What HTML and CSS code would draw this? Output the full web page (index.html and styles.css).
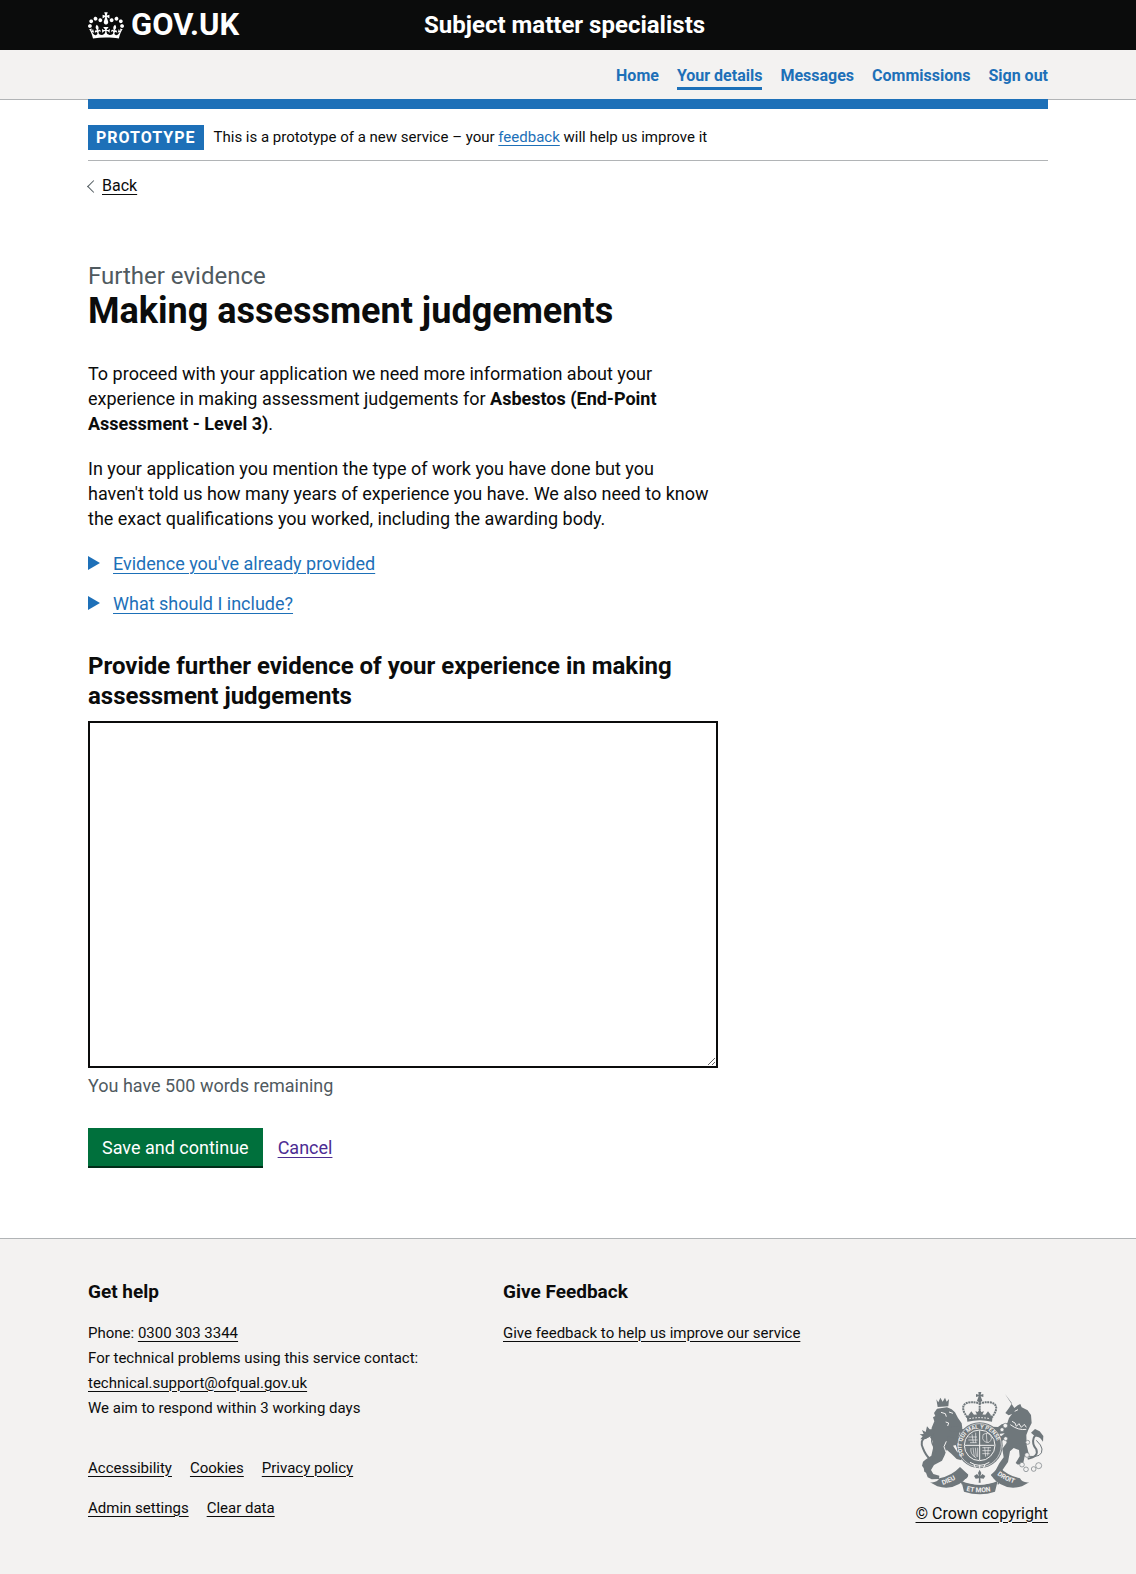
FILE: index.html
```html
<!DOCTYPE html>
<html lang="en">
<head>
  <meta charset="utf-8">
  <meta name="viewport" content="width=device-width, initial-scale=1">
  <title>Making assessment judgements – Subject matter specialists</title>
  <link rel="stylesheet" href="styles.css">
</head>
<body>
  <header class="header">
    <div class="container header-inner">
      <a class="header-logo" href="#">
        <svg class="header-crown" viewBox="0 0 132 97" aria-hidden="true"><path fill="currentColor" fill-rule="evenodd" d="M25 30.2c3.5 1.5 7.7-.2 9.1-3.7 1.5-3.6-.2-7.8-3.9-9.2-3.6-1.4-7.6.3-9.1 3.9-1.4 3.5.3 7.5 3.9 9zM9 39.5c3.6 1.5 7.8-.2 9.2-3.7 1.5-3.6-.2-7.8-3.9-9.1-3.6-1.5-7.6.2-9.1 3.8-1.4 3.5.3 7.5 3.8 9zM4.4 57.2c3.5 1.5 7.7-.2 9.1-3.8 1.5-3.6-.2-7.7-3.9-9.1-3.5-1.5-7.6.3-9.1 3.8-1.4 3.5.3 7.6 3.9 9.1zm38.3-21.4c3.5 1.5 7.7-.2 9.1-3.8 1.5-3.6-.2-7.7-3.9-9.1-3.6-1.5-7.6.3-9.1 3.8-1.3 3.6.4 7.7 3.9 9.1zm64.4-5.6c-3.6 1.5-7.8-.2-9.1-3.7-1.5-3.6.2-7.8 3.8-9.2 3.6-1.4 7.7.3 9.2 3.9 1.3 3.5-.4 7.5-3.9 9zm15.9 9.3c-3.6 1.5-7.7-.2-9.1-3.7-1.5-3.6.2-7.8 3.7-9.1 3.6-1.5 7.7.2 9.2 3.8 1.5 3.5-.3 7.5-3.8 9zm4.7 17.7c-3.6 1.5-7.8-.2-9.2-3.8-1.5-3.6.2-7.7 3.9-9.1 3.6-1.5 7.7.3 9.2 3.8 1.3 3.5-.4 7.6-3.9 9.1zM89.3 35.8c-3.6 1.5-7.8-.2-9.2-3.8-1.4-3.6.2-7.7 3.9-9.1 3.6-1.5 7.7.3 9.2 3.8 1.4 3.6-.3 7.7-3.9 9.1zM69.7 17.7l8.9 4.7V9.3l-8.9 2.8c-.2-.3-.5-.6-.9-.9L72.4 0H59.6l3.5 11.2c-.3.3-.6.5-.9.9l-8.8-2.8v13.1l8.8-4.7c.3.3.6.7.9.9l-5 15.4v.1c-.2.8-.4 1.6-.4 2.4 0 4.1 3.1 7.5 7 8.1h.2c.3 0 .7.1 1 .1.4 0 .7 0 1-.1h.2c4-.6 7.1-4.1 7.1-8.1 0-.8-.1-1.7-.4-2.4V34l-5.1-15.4c.4-.2.7-.6 1-.9zM66 92.8c16.9 0 32.8 1.1 47.1 3.2 4-16.9 8.9-26.7 14-33.5l-9.6-3.4c1 4.9 1.1 7.2 0 10.2-1.5-1.4-3-4.3-4.2-8.7L108.6 76c2.8-2 5-3.2 7.5-3.3-4.4 9.4-10 11.9-13.6 11.2-4.3-.8-6.3-4.6-5.6-7.9 1-4.7 5.7-5.9 8-.5 4.3-8.7-3-11.4-7.6-8.8 7.1-7.2 7.9-13.5 2.1-21.1-8 6.1-8.1 12.3-4.5 20.8-4.7-5.4-12.1-2.5-9.5 6.2 3.4-5.2 7.9-2 7.2 3.1-.6 4.3-6.4 7.8-13.5 7.2-10.3-.9-10.9-8-11.2-13.8 2.5-.5 7.1 1.8 11 7.3L80.2 60c-4.1 4.4-8 5.3-12.3 5.4 1.4-4.4 8-11.6 8-11.6H55.5s6.4 7.2 7.9 11.6c-4.2-.1-8-1-12.3-5.4l1.4 16.4c3.9-5.5 8.5-7.7 10.9-7.3-.3 5.8-.9 12.8-11.1 13.8-7.2.6-12.9-2.9-13.5-7.2-.7-5 3.8-8.3 7.1-3.1 2.7-8.7-4.6-11.6-9.4-6.2 3.7-8.5 3.6-14.7-4.6-20.8-5.8 7.6-5 13.9 2.2 21.1-4.7-2.6-11.9.1-7.7 8.8 2.3-5.5 7.1-4.2 8.1.5.7 3.3-1.3 7.1-5.7 7.9-3.5.7-9-1.8-13.5-11.2 2.5.1 4.7 1.3 7.5 3.3l-4.7-15.4c-1.2 4.4-2.7 7.2-4.3 8.7-1.1-3-.9-5.3 0-10.2l-9.5 3.4c5 6.9 9.9 16.7 14 33.5 14.8-2.1 30.8-3.2 47.7-3.2z"/></svg>
        <span>GOV.UK</span>
      </a>
      <a class="header-service" href="#">Subject matter specialists</a>
    </div>
  </header>

  <nav class="nav" aria-label="Account">
    <ul class="container nav-list">
      <li><a class="nav-link" href="#">Home</a></li>
      <li><a class="nav-link nav-link-current" href="#" aria-current="page">Your details</a></li>
      <li><a class="nav-link" href="#">Messages</a></li>
      <li><a class="nav-link" href="#">Commissions</a></li>
      <li><a class="nav-link" href="#">Sign out</a></li>
    </ul>
  </nav>

  <div class="page">
    <div class="container page-inner">
      <div class="phase-banner">
        <strong class="tag">PROTOTYPE</strong>
        <span>This is a prototype of a new service – your <a class="link" href="#">feedback</a> will help us improve it</span>
      </div>
      <a class="back-link" href="#">Back</a>

      <main class="main">
        <h1 class="heading-l"><span class="caption">Further evidence</span>Making assessment judgements</h1>
        <p class="body-text">To proceed with your application we need more information about your experience in making assessment judgements for <strong>Asbestos (End-Point Assessment - Level 3)</strong>.</p>
        <p class="body-text">In your application you mention the type of work you have done but you haven't told us how many years of experience you have. We also need to know the exact qualifications you worked, including the awarding body.</p>

        <details class="details">
          <summary class="summary"><span>Evidence you've already provided</span></summary>
        </details>
        <details class="details">
          <summary class="summary"><span>What should I include?</span></summary>
        </details>

        <form class="form">
          <label class="label" for="evidence">Provide further evidence of your experience in making assessment judgements</label>
          <textarea class="textarea" id="evidence" name="evidence" aria-describedby="word-count"></textarea>
          <p class="hint" id="word-count">You have 500 words remaining</p>
          <div class="actions">
            <button class="button" type="submit">Save and continue</button>
            <a class="link link-visited" href="#">Cancel</a>
          </div>
        </form>
      </main>
    </div>
  </div>

  <footer class="footer">
    <div class="container footer-inner">
      <div class="footer-content">
        <div class="footer-columns">
          <section>
            <h2 class="footer-heading">Get help</h2>
            <p>Phone: <a href="#">0300 303 3344</a><br>For technical problems using this service contact:<br><a href="#">technical.support@ofqual.gov.uk</a><br>We aim to respond within 3 working days</p>
          </section>
          <section>
            <h2 class="footer-heading">Give Feedback</h2>
            <p><a href="#">Give feedback to help us improve our service</a></p>
          </section>
        </div>
        <ul class="footer-links">
          <li><a href="#">Accessibility</a></li>
          <li><a href="#">Cookies</a></li>
          <li><a href="#">Privacy policy</a></li>
        </ul>
        <ul class="footer-links">
          <li><a href="#">Admin settings</a></li>
          <li><a href="#">Clear data</a></li>
        </ul>
      </div>
      <a class="copyright" href="#">
        <svg class="crest" viewBox="54 33 390 312" aria-hidden="true">
          <defs>
            <path id="garter" d="M195 226A54 54 0 1 1 289 226"/>
            <path id="ribbon-left" d="M131 315Q160 306 192 283"/>
            <path id="ribbon-mid" d="M202 332Q242 342 286 332"/>
            <path id="ribbon-right" d="M294 284Q322 306 364 316"/>
          </defs>
          <!-- lion -->
          <g class="crest-solid">
            <path d="M112 58l6 9 6-14 7 12 7-12 5 12 7-8-2 22-32 2z"/>
            <path d="M114 86l30-4 14 6 10 9 9 17 11 16 2 15-7 9-6 22 8 15-1 14-10-1-4-9-8 2 12 18 15 14-2 12-14-4-16-16-14-12-6 17-8 16-24 13-9 15 7 12 18 5-1 10-22 1-12-6-5-14-5-3-2-11-5-7 3-12 7-6 18-12 5-22-1-22-8-11 4-12 1-17 8-19-4-12 7-4-4-9z"/>
            <path d="M150 142l29-3 16 11-5 12-13-8-23 1zM146 168l26 9 13 13-6 10-32-19z"/>
          </g>
          <path class="crest-line" d="M94 238q-14-12-22-33-11-25 8-33 19-5 22-22" stroke-width="6"/>
          <path class="crest-line" d="M100 240q20-12 6-36-15-23-2-40" stroke-width="4"/>
          <path class="crest-solid" d="M64 178l7-9-9-6 12-1-5-12 11 6 4-17 8 9 13 0 3 11-14 9-13 9z"/>
          <path class="crest-gap" d="M126 97l13 4 3 9m8-14l12 4M140 126l9 3-3 9M142 184l-7 16 6 17" stroke-width="3"/>
          <!-- unicorn -->
          <path class="crest-solid" d="M318 42l28 42 10-8 8-4 4 10 18 9 10 14 2 24-10 20-6 16 1 30 6 26-12 8-4 19-16 6-7-5 12-20-2-19-16-6-11 10-6 32-16 23-18 18-9-5 17-32 13-18-4-26 13-18-7-28-17 2-12-10-14 4-5-8 11-8 18 1 11-8 17-4 5-15 9-12-10 4-10-7 11-15 9-14z"/>
          <path class="crest-solid" d="M320 158l-24 18-3 21 12 7 4-21 20-14z"/>
          <path class="crest-line" d="M386 236q34-6 26-28-14-16-8-34 6-16 24-1" stroke-width="6"/>
          <path class="crest-line" d="M389 229q42 5 40-22-1-11-17-26" stroke-width="3"/>
          <path class="crest-solid" d="M396 158l12-11 14 7 11 14-1 17-9-12-17-6z"/>
          <path class="crest-gap" d="M334 134q24 18 48 14M347 94l10-5M339 124l9 5 4 10 8-8 7 11 9-9 6 9" stroke-width="3"/>
          <g class="crest-link">
            <circle cx="319" cy="137" r="7"/><circle cx="309" cy="149" r="6"/><circle cx="320" cy="176" r="6"/>
            <circle cx="386" cy="187" r="6"/><circle cx="384" cy="225" r="7"/><circle cx="369" cy="254" r="7"/>
            <circle cx="381" cy="268" r="7"/><circle cx="404" cy="267" r="7"/><circle cx="419" cy="257" r="9"/>
          </g>
          <!-- crown -->
          <path class="crest-solid" d="M238 36h9l-2 8 8-2v9l-8-2 5 13-8 6-8-6 5-13-8 2v-9l8 2z"/>
          <path class="crest-line" d="M205 112q-21-28-7-40 14-10 44-2 30-8 44 2 14 12-7 40M242 69v38" stroke-width="6" stroke-dasharray="6 2"/>
          <path class="crest-solid" d="M203 107q39-9 78 0l-2 18q-37-9-74 0zM242 87l5 9 8-2-5 10h-16l-5-10 8 2zM217 94l9 12h-18zM267 94l9 12h-18z"/>
          <path class="crest-gap" d="M211 116q31-6 62 0" stroke-width="3" stroke-dasharray="5 4"/>
          <!-- garter and shield -->
          <circle class="crest-solid" cx="242" cy="196" r="69"/>
          <circle class="crest-gap" cx="242" cy="196" r="65" stroke-width="2"/>
          <circle class="crest-gap" cx="242" cy="196" r="46" stroke-width="3"/>
          <text class="crest-motto"><textPath href="#garter">SOIT QUI MAL Y PENSE</textPath></text>
          <path class="crest-gap" d="M242 151v89M198 196h88" stroke-width="3"/>
          <path class="crest-gap" d="M208 171h26M208 180h28M213 188h20M219 163l4 25M230 158v30M250 203h26M250 212h26M250 221h22M257 202l3 28M268 202l-2 25M252 164q14-9 22 2t-4 21q-14 2-19-11zM262 160l2 28M216 204q-4 19 16 30M222 203l4 28M229 203l3 27M236 203v28" stroke-width="2"/>
          <path class="crest-gap" d="M213 247q29 18 58 0M225 253l4 11M242 254v12M258 252l-4 12" stroke-width="3"/>
          <!-- motto ribbon -->
          <path class="crest-solid" d="M93 307q22 2 28-12 38-8 62-34l26 24q-36 50-94 34z"/>
          <path class="crest-solid" d="M391 307q-22 2-28-12-38-8-62-34l-26 24q36 50 94 34z"/>
          <path class="crest-solid" d="M187 303q55 23 109 0l-8 32q-45 15-93 0z"/>
          <path class="crest-line" d="M181 287q5 15 21 6 9-9-6-13M303 289q-8 14-18 4-6-9 8-12M183 292l7 21M303 292l-6 21" stroke-width="4"/>
          <path class="crest-paper" d="M210 309l-2-30q34 14 68 0l-2 30q-32 10-64 0z"/>
          <path class="crest-solid" d="M239 308l1-13-10 1-5-8 9-6 6 7-3-10 5-10 5 10-3 10 6-7 9 6-5 8-10-1 1 13z"/>
          <text class="crest-words"><textPath href="#ribbon-left">DIEU</textPath></text>
          <text class="crest-words"><textPath href="#ribbon-mid">ET MON</textPath></text>
          <text class="crest-words"><textPath href="#ribbon-right">DROIT</textPath></text>
        </svg>
        <span>© Crown copyright</span>
      </a>
    </div>
  </footer>
</body>
</html>
```
FILE: styles.css
```css
* {
  box-sizing: border-box;
}

body {
  margin: 0;
  background: #f3f2f1;
  color: #0b0c0c;
  font: 18px/25px Roboto, "Liberation Sans", sans-serif;
}

h1,
h2,
p,
ul {
  margin: 0;
  padding: 0;
}

ul {
  list-style: none;
}

a {
  color: inherit;
  text-decoration-thickness: 1px;
  text-underline-offset: 3px;
}

.container {
  max-width: 960px;
  margin: 0 auto;
}

/* Header */
.header {
  background: #0b0c0c;
  color: #fff;
}

.header-inner {
  display: flex;
  align-items: center;
  min-height: 50px;
}

.header-logo {
  display: flex;
  align-items: center;
  gap: 7px;
  flex: 0 0 35%;
  font-size: 31px;
  line-height: 30px;
  font-weight: 700;
  text-decoration: none;
}

.header-crown {
  width: 36px;
  height: 27px;
}

.header-service {
  font-size: 24px;
  line-height: 30px;
  font-weight: 700;
  text-decoration: none;
}

/* Account navigation */
.nav-list {
  display: flex;
  justify-content: flex-end;
  gap: 18px;
  padding: 14px 0 9px;
}

.nav-link {
  display: block;
  border-bottom: 3px solid transparent;
  color: #1d70b8;
  font-size: 16px;
  line-height: 23px;
  font-weight: 700;
  text-decoration: none;
}

.nav-link-current {
  border-color: #1d70b8;
}

/* Page body */
.page {
  background: #fff linear-gradient(#b1b4b6, #b1b4b6) top / 100% 1px no-repeat;
}

.page-inner {
  border-top: 10px solid #1d70b8;
}

.phase-banner {
  display: flex;
  align-items: center;
  gap: 10px;
  padding: 16px 0 10px;
  border-bottom: 1px solid #b1b4b6;
  font-size: 15px;
}

.tag {
  padding: 0 8px;
  background: #1d70b8;
  color: #fff;
  font-size: 16px;
  letter-spacing: 1px;
}

.link {
  color: #1d70b8;
}

.link-visited {
  color: #4c2c92;
}

.back-link {
  display: inline-flex;
  align-items: center;
  gap: 4px;
  margin-top: 15px;
  font-size: 16px;
  line-height: 20px;
}

.back-link::before {
  content: "";
  width: 8px;
  height: 8px;
  margin-left: 1px;
  border: solid #505a5f;
  border-width: 1px 0 0 1px;
  transform: rotate(-45deg);
}

.main {
  max-width: 630px;
  padding: 64px 0 70px;
}

.heading-l {
  margin-bottom: 30px;
  font-size: 36px;
  line-height: 40px;
}

.caption {
  display: block;
  color: #505a5f;
  font-size: 24px;
  line-height: 30px;
  font-weight: 400;
}

.body-text {
  margin-bottom: 20px;
  padding-right: 8px;
}

.details {
  margin-bottom: 15px;
}

.summary {
  display: flex;
  align-items: center;
  gap: 13px;
  color: #1d70b8;
  text-decoration: underline 1px;
  text-underline-offset: 3px;
}

.summary::before {
  content: "";
  border: solid transparent;
  border-width: 7px 0 7px 12px;
  border-left-color: #1d70b8;
}

.form {
  padding-top: 20px;
}

.label {
  display: block;
  margin-bottom: 10px;
  font-size: 24px;
  line-height: 30px;
  font-weight: 700;
}

.textarea {
  display: block;
  width: 100%;
  height: 347px;
  padding: 5px;
  border: 2px solid #0b0c0c;
  border-radius: 0;
  font: inherit;
  resize: vertical;
}

.hint {
  margin: 5px 0 30px;
  color: #505a5f;
}

.actions {
  display: flex;
  align-items: center;
  gap: 15px;
}

.button {
  height: 40px;
  padding: 0 14px;
  border: 0;
  background: #00703c;
  box-shadow: inset 0 -2px 0 #002d18;
  color: #fff;
  font: inherit;
}

/* Footer */
.footer {
  padding: 40px 0 53px;
  border-top: 1px solid #b1b4b6;
  font-size: 15px;
}

.footer-inner {
  display: flex;
  align-items: flex-end;
  justify-content: space-between;
}

.footer-content {
  flex: 0 1 800px;
}

.footer-columns {
  display: grid;
  grid-template-columns: 1fr 1fr;
  gap: 30px;
  margin-bottom: 35px;
}

.footer-heading {
  margin-bottom: 17px;
  font-size: 19px;
  line-height: 25px;
}

.footer-links {
  display: flex;
  gap: 18px;
}

.footer-links + .footer-links {
  margin-top: 15px;
}

.copyright {
  display: flex;
  flex-direction: column;
  align-items: center;
  gap: 6px;
  margin-bottom: -5px;
  font-size: 16px;
}

.crest {
  width: 130px;
  height: 104px;
}

.crest-solid {
  fill: #6f777b;
}

.crest-paper {
  fill: #f3f2f1;
}

.crest-line {
  fill: none;
  stroke: #6f777b;
}

.crest-gap {
  fill: none;
  stroke: #f3f2f1;
}

.crest-link {
  fill: #f3f2f1;
  stroke: #6f777b;
  stroke-width: 2px;
}

.crest-motto,
.crest-words {
  fill: #f3f2f1;
  font-size: 17px;
  font-weight: 700;
}

.crest-words {
  font-size: 20px;
}
```
